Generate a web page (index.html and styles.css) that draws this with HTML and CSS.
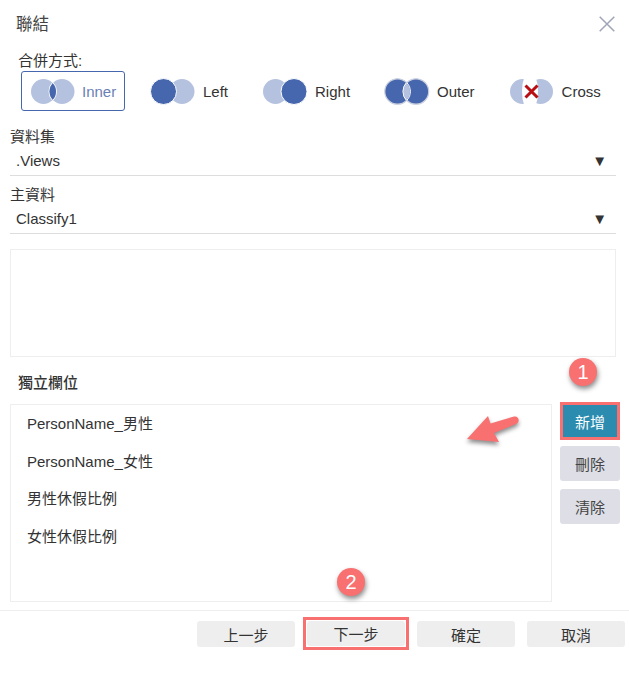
FILE: index.html
```html
<!DOCTYPE html>
<html lang="zh-Hant">
<head>
    <meta charset="UTF-8">
    <meta name="viewport" content="width=device-width, initial-scale=1.0">
    <title>聯結</title>
    <link rel="stylesheet" href="styles.css">
</head>
<body>
    <svg class="defs" width="0" height="0" aria-hidden="true">
        <defs>
            <clipPath id="clip-a"><circle cx="12.5" cy="12.5" r="12.5"/></clipPath>
            <clipPath id="clip-b"><circle cx="31" cy="12.5" r="12.5"/></clipPath>
        </defs>
    </svg>

    <div class="dialog">
        <header class="dialog-head">
            <h1 class="dialog-title">聯結</h1>
            <svg class="close" width="16" height="16" viewBox="0 0 16 16"><path d="M.7.7l14.6 14.6M15.3.7L.7 15.3"/></svg>
        </header>

        <!-- Join type -->
        <div class="join-label">合併方式:</div>
        <div class="join-row">
            <div class="join-opt selected">
                <svg class="venn" width="44" height="25" viewBox="0 0 44 25">
                    <circle class="light" cx="12.5" cy="12.5" r="12.5"/>
                    <circle class="light" cx="31" cy="12.5" r="12.5"/>
                    <g clip-path="url(#clip-b)"><circle class="edge" cx="12.5" cy="12.5" r="13"/></g>
                    <g clip-path="url(#clip-a)"><circle class="edge" cx="31" cy="12.5" r="13"/></g>
                    <g clip-path="url(#clip-a)"><circle class="dark" cx="31" cy="12.5" r="12.5"/></g>
                </svg>
                <span>Inner</span>
            </div>
            <div class="join-opt">
                <svg class="venn" width="44" height="25" viewBox="0 0 44 25">
                    <circle class="light" cx="31" cy="12.5" r="12.5"/>
                    <circle class="dark outline" cx="12.5" cy="12.5" r="13"/>
                </svg>
                <span>Left</span>
            </div>
            <div class="join-opt">
                <svg class="venn" width="44" height="25" viewBox="0 0 44 25">
                    <circle class="light" cx="12.5" cy="12.5" r="12.5"/>
                    <circle class="dark outline" cx="31" cy="12.5" r="13"/>
                </svg>
                <span>Right</span>
            </div>
            <div class="join-opt">
                <svg class="venn" width="44" height="25" viewBox="0 0 44 25">
                    <circle class="dark ring" cx="12.5" cy="12.5" r="12.7"/>
                    <circle class="dark ring" cx="31" cy="12.5" r="12.7"/>
                    <g clip-path="url(#clip-b)"><circle class="edge" cx="12.5" cy="12.5" r="13"/></g>
                    <g clip-path="url(#clip-a)"><circle class="edge" cx="31" cy="12.5" r="13"/></g>
                    <g clip-path="url(#clip-a)"><circle class="light" cx="31" cy="12.5" r="12.5"/></g>
                </svg>
                <span>Outer</span>
            </div>
            <div class="join-opt">
                <svg class="venn" width="44" height="25" viewBox="0 0 44 25">
                    <circle class="light" cx="12.5" cy="12.5" r="12.5"/>
                    <circle class="light" cx="30.5" cy="12.5" r="12.5"/>
                    <ellipse fill="#fff" cx="20" cy="12.5" rx="8" ry="20"/>
                    <path class="cross" d="M15.500 6.500L27.500 18.500M27.500 6.500L15.500 18.500"/>
                </svg>
                <span>Cross</span>
            </div>
        </div>

        <!-- Selects -->
        <div class="field field-first">
            <label>資料集</label>
            <div class="select"><span>.Views</span><span class="caret">▼</span></div>
        </div>
        <div class="field">
            <label>主資料</label>
            <div class="select"><span>Classify1</span><span class="caret">▼</span></div>
        </div>

        <div class="empty-box"></div>

        <div class="section-label">獨立欄位</div>
        <div class="fields-row">
            <ul class="field-list">
                <li>PersonName_男性</li>
                <li>PersonName_女性</li>
                <li>男性休假比例</li>
                <li>女性休假比例</li>
            </ul>
            <div class="side-btns">
                <button class="btn-add">新增</button>
                <button class="btn-side">刪除</button>
                <button class="btn-side">清除</button>
            </div>
        </div>

        <footer class="dialog-foot">
            <button class="btn">上一步</button>
            <div class="mark"><button class="btn">下一步</button></div>
            <button class="btn">確定</button>
            <button class="btn">取消</button>
        </footer>
    </div>

    <!-- Annotations on top of the screenshot -->
    <div class="badge badge-1">1</div>
    <div class="badge badge-2">2</div>
    <svg class="arrow" width="60" height="40" viewBox="0 0 60 40">
        <path d="M6 31L27 8 29.500 15.500 53 8.500C58 7.500 59.500 14 55 16L33 25 38 34z"/>
    </svg>
</body>
</html>
```

FILE: styles.css
```css
* {
    box-sizing: border-box;
    margin: 0;
    padding: 0;
}

body {
    font-family: "Liberation Sans", "Noto Sans CJK TC", sans-serif;
    font-size: 15px;
    color: #333;
    background: #fff;
    position: relative;
}

.defs {
    position: absolute;
}

.dialog {
    width: 629px;
    height: 675px;
    display: flex;
    flex-direction: column;
}

/* Header */
.dialog-head {
    height: 50px;
    padding: 0 14px 2px 16px;
    display: flex;
    justify-content: space-between;
    align-items: center;
}

.dialog-title {
    font-size: 16.500px;
    font-weight: normal;
    line-height: 22px;
    color: #444;
}

.close path {
    fill: none;
    stroke: #a0a4b8;
    stroke-width: 1.5;
}

/* Join type */
.join-label {
    margin-left: 18px;
    height: 21px;
    line-height: 22px;
}

.join-row {
    display: flex;
    gap: 15px;
    margin-left: 21px;
    height: 40px;
}

.join-opt {
    display: flex;
    align-items: center;
    gap: 8px;
    padding: 0 9px;
    border: 1px solid transparent;
    border-radius: 3px;
}

.join-opt.selected {
    width: 104px;
    gap: 7px;
    margin-right: 1px;
    padding-right: 0;
    border-color: #4667ad;
    color: #6a7fb5;
}

.venn {
    overflow: visible;
}

.light {
    fill: #b5c2df;
}

.dark {
    fill: #4667ad;
}

.edge {
    fill: none;
    stroke: #fff;
    stroke-width: 1;
}

.outline {
    stroke: #fff;
    stroke-width: 1;
}

.ring {
    stroke: #c9cfdf;
    stroke-width: 1.200;
}

.cross {
    fill: none;
    stroke: #b80d12;
    stroke-width: 3;
}

/* Selects */
.field {
    margin: 0 13px 0 10px;
    height: 58px;
}

.field-first {
    margin-top: 15px;
}

.field label {
    display: block;
    height: 22px;
    line-height: 22px;
}

.select {
    height: 28px;
    padding: 0 9px 0 6px;
    line-height: 26px;
    border-bottom: 1px solid #ddd;
    display: flex;
    justify-content: space-between;
}

.empty-box {
    margin: 7px 13px 0 10px;
    height: 108px;
    border: 1px solid #eee;
}

.section-label {
    margin: 16px 0 0 18px;
    height: 31px;
    line-height: 20px;
    font-weight: 500;
}

/* Field list and its buttons */
.fields-row {
    display: flex;
    height: 198px;
    margin-left: 10px;
}

.field-list {
    width: 542px;
    list-style: none;
    border: 1px solid #eee;
    padding: 0 16px;
}

.field-list li {
    height: 37.500px;
    line-height: 37.500px;
}

.side-btns {
    width: 60px;
    margin: -2px 0 0 8px;
}

.side-btns button {
    display: block;
    width: 60px;
    font: inherit;
}

.btn-add {
    height: 38px;
    margin-bottom: 6px;
    color: #fff;
    background: #2b8cb0;
    border: 3px solid #f87070;
}

.btn-side {
    height: 35px;
    margin-bottom: 8px;
    color: #444;
    background: #dddee6;
    border: none;
    border-radius: 3px;
}

/* Footer */
.dialog-foot {
    margin-top: 8px;
    padding: 10px 4px 0 0;
    border-top: 1px solid #eee;
    display: flex;
    justify-content: flex-end;
    gap: 12px;
}

.btn {
    width: 98px;
    height: 26px;
    font: inherit;
    color: #333;
    background: #eee;
    border: none;
    border-radius: 3px;
}

.mark {
    height: 33px;
    margin: -4px -4px 0;
    padding: 1px;
    border: 3px solid #f87070;
}

.mark .btn {
    display: block;
    height: 25px;
}

/* Annotations */
.badge {
    position: absolute;
    width: 28px;
    height: 28px;
    line-height: 28px;
    text-align: center;
    font-size: 20px;
    color: #fff;
    background: #f87070;
    border-radius: 50%;
    box-shadow: 1px 3px 5px rgba(0, 0, 0, 0.45);
}

.badge-1 {
    left: 569px;
    top: 358px;
}

.badge-2 {
    left: 337px;
    top: 568px;
}

.arrow {
    position: absolute;
    left: 461px;
    top: 408px;
    fill: #f87070;
    filter: drop-shadow(0 3px 2px rgba(0, 0, 0, 0.45));
}
```
